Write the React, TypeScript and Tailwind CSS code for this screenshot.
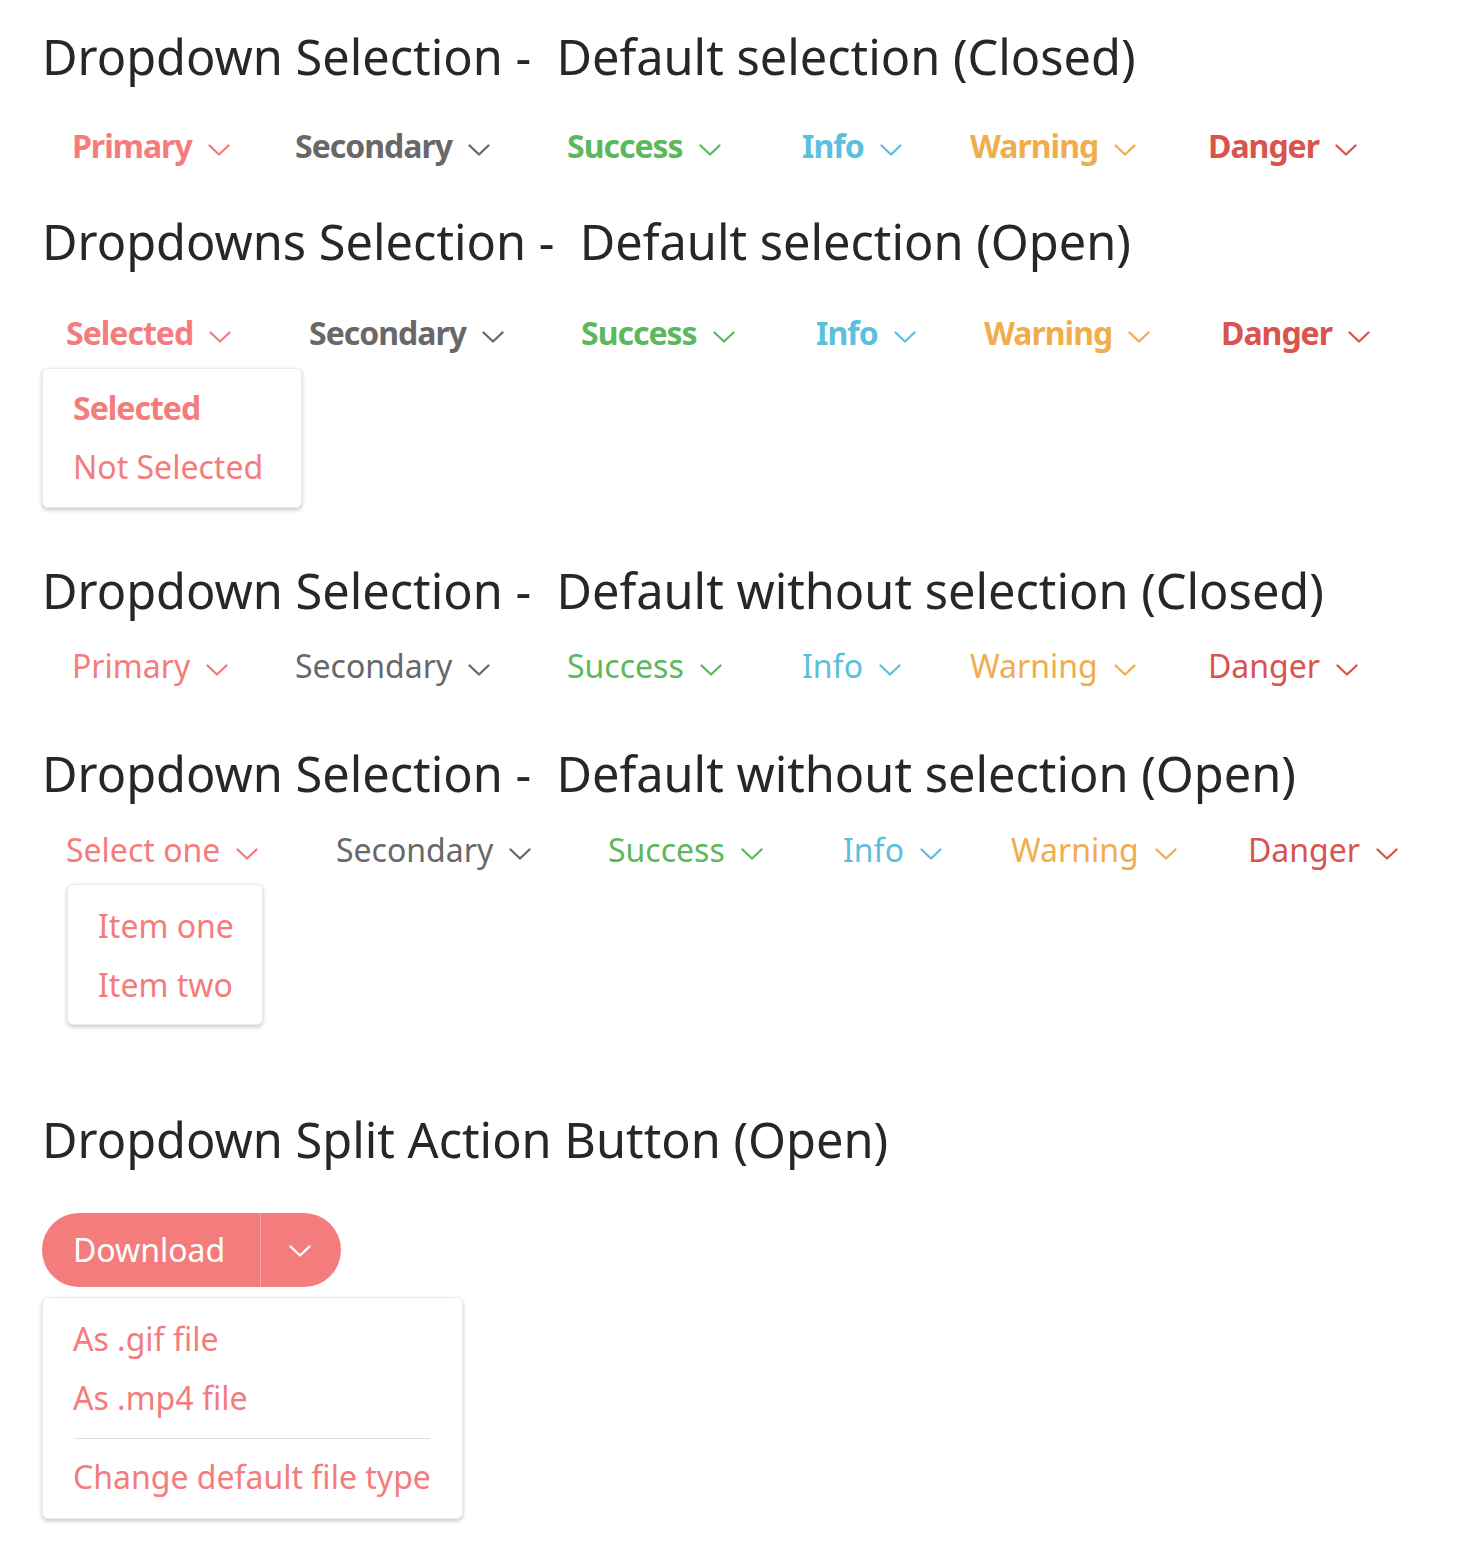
type Item = { label: string; color: string; w?: string };

const Chevron = ({ color, className = "" }: { color: string; className?: string }) => (
  <svg width="22" height="12" viewBox="0 0 22 12" fill="none" className={className}>
    <path d="M1.5 1.5 L11 10.5 L20.5 1.5" stroke={color} strokeWidth="2.3" strokeLinecap="round" strokeLinejoin="round" />
  </svg>
);

const Row = ({ items, bold, pad }: { items: Item[]; bold: boolean; pad: string }) => (
  <div className={`flex h-[48px] items-center ${pad}`}>
    {items.map((it, i) => (
      <div key={i} className={`flex shrink-0 items-center ${it.w ?? ""}`}>
        <span
          className={`text-[32px] leading-[48px] ${bold ? "font-bold tracking-[-1px]" : "font-normal"}`}
          style={{ color: it.color }}
        >
          {it.label}
        </span>
        <Chevron color={it.color} className="ml-[16px] translate-y-[4px]" />
      </div>
    ))}
  </div>
);

const Heading = ({ children, mt }: { children: React.ReactNode; mt: string }) => (
  <h2 className={`flex h-[60px] items-center whitespace-pre text-[48.7px] font-normal leading-[60px] text-[#272727] ${mt}`}>{children}</h2>
);

const C = {
  primary: "#f47c7c",
  secondary: "#686868",
  success: "#5cb85c",
  info: "#5bc0de",
  warning: "#f0ad4e",
  danger: "#d9534f",
};

const rowA = (first: string, firstW: string): Item[] => [
  { label: first, color: C.primary, w: firstW },
  { label: "Secondary", color: C.secondary, w: "w-[272px]" },
  { label: "Success", color: C.success, w: "w-[235px]" },
  { label: "Info", color: C.info, w: "w-[168px]" },
  { label: "Warning", color: C.warning, w: "w-[238px]" },
  { label: "Danger", color: C.danger },
];

const MenuItem = ({ children, bold = false, mt = "" }: { children: React.ReactNode; bold?: boolean; mt?: string }) => (
  <div className={`flex h-[59px] items-center whitespace-nowrap px-[30px] text-[32px] leading-[59px] text-[#f47c7c] ${bold ? "font-bold tracking-[-1px]" : ""} ${mt}`}>
    {children}
  </div>
);

const menuBox = "rounded-[6px] border border-[#ebebeb] bg-white shadow-[0_2px_4px_rgba(0,0,0,0.22)]";

export default function App() {
  return (
    <div className="min-h-[1554px] bg-white pl-[42px] pb-10" style={{ fontFamily: '"Noto Sans", sans-serif' }}>
      <div className="h-[26px]" />
      <Heading mt="">{"Dropdown Selection -\u00a0 Default selection (Closed)"}</Heading>
      <div className="mt-[36px]">
        <Row bold pad="pl-[30px]" items={rowA("Primary", "w-[223px]")} />
      </div>

      <Heading mt="mt-[41px]">{"Dropdowns Selection -\u00a0 Default selection (Open)"}</Heading>
      <div className="mt-[38px]">
        <Row bold pad="pl-[24px]" items={rowA("Selected", "w-[243px]").map((x, i) => (i === 4 ? { ...x, w: "w-[237px]" } : x))} />
      </div>
      <div className={`mt-[11px] h-[140px] w-[260px] pt-[9px] ${menuBox}`}>
        <MenuItem bold>Selected</MenuItem>
        <MenuItem>Not Selected</MenuItem>
      </div>

      <Heading mt="mt-[52px]">{"Dropdown Selection -\u00a0 Default without selection (Closed)"}</Heading>
      <div className="mt-[22px]">
        <Row bold={false} pad="pl-[30px]" items={rowA("Primary", "w-[223px]")} />
      </div>

      <Heading mt="mt-[53px]">{"Dropdown Selection -\u00a0 Default without selection (Open)"}</Heading>
      <div className="mt-[23px]">
        <Row bold={false} pad="pl-[24px]" items={rowA("Select one", "w-[270px]").map((x, i) => (i === 4 ? { ...x, w: "w-[237px]" } : x))} />
      </div>
      <div className={`ml-[25px] mt-[10px] h-[141px] w-[196px] pt-[11px] ${menuBox}`}>
        <MenuItem>Item one</MenuItem>
        <MenuItem>Item two</MenuItem>
      </div>

      <Heading mt="mt-[84px]">{"Dropdown Split Action Button (Open)"}</Heading>

      <div className="mt-[44px] flex h-[74px] w-[299px] overflow-hidden rounded-full bg-[#f47c7c]">
        <button className="flex h-full w-[218px] items-center pl-[31px] text-[32px] font-normal text-white">Download</button>
        <div className="h-full w-px bg-[#f8a9a9]" />
        <button className="flex h-full flex-1 items-center justify-center pr-[2px]">
          <Chevron color="#ffffff" className="translate-y-[1px]" />
        </button>
      </div>

      <div className={`mt-[10px] h-[222px] w-[421px] pt-[11px] ${menuBox}`}>
        <MenuItem>As .gif file</MenuItem>
        <MenuItem>As .mp4 file</MenuItem>
        <div className="mx-[32px] mt-[11px] h-px bg-[#dedede]" />
        <MenuItem mt="mt-[8px]">Change default file type</MenuItem>
      </div>
    </div>
  );
}
